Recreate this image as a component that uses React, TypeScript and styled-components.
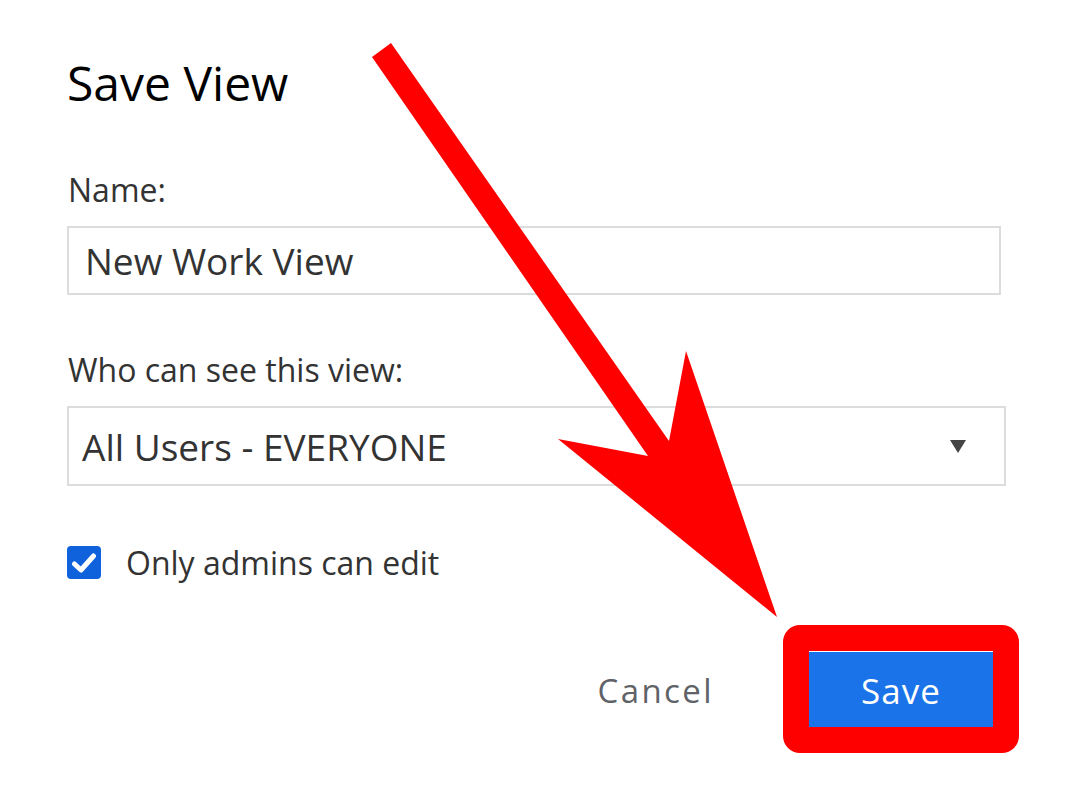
import {FC} from 'react'
import styled, {createGlobalStyle} from 'styled-components'

const GlobalStyle = createGlobalStyle`
  html, body {
    margin: 0;
    padding: 0;
    background: #ffffff;
  }

  body {
    font-family: "Open Sans", "Noto Sans", sans-serif;
  }
`

const Page = styled.div`
  position: relative;
  width: 1074px;
  height: 786px;
  overflow: hidden;
  background: #ffffff;
`

const Dialog = styled.div`
  display: flex;
  flex-direction: column;
  width: 939px;
  padding: 53px 0 0 67px;
`

const Title = styled.h1`
  margin: 0;
  font-size: 48px;
  line-height: 60px;
  font-weight: 400;
  color: #000000;
`

const Field = styled.div<{$top: number}>`
  display: flex;
  flex-direction: column;
  gap: 16px;
  margin-top: ${p => p.$top}px;
`

const Label = styled.label`
  padding-left: 1px;
  font-size: 32px;
  line-height: 40px;
  color: #333333;
`

const TextInput = styled.input`
  box-sizing: border-box;
  width: 934px;
  height: 69px;
  margin: 0;
  padding: 0 16px;
  border: 2px solid #dcdcdc;
  border-radius: 0;
  outline: none;
  font-family: inherit;
  font-size: 37px;
  color: #333333;
  background: #ffffff;
`

const SelectBox = styled.div`
  box-sizing: border-box;
  display: flex;
  align-items: center;
  justify-content: space-between;
  width: 939px;
  height: 80px;
  padding: 0 38px 0 13px;
  border: 2px solid #dcdcdc;
  font-size: 37px;
  color: #333333;
`

const Caret = styled.span`
  width: 0;
  height: 0;
  border-left: 8.5px solid transparent;
  border-right: 8.5px solid transparent;
  border-top: 13px solid #444444;
`

const CheckRow = styled.label`
  display: flex;
  align-items: center;
  gap: 25px;
  margin-top: 60px;
  font-size: 32px;
  line-height: 33px;
  color: #333333;
`

const CheckBox = styled.span`
  display: flex;
  align-items: center;
  justify-content: center;
  width: 34px;
  height: 33px;
  border-radius: 4px;
  background: #0f62dc;
`

const Actions = styled.div`
  display: flex;
  justify-content: flex-end;
  align-items: center;
  gap: 95px;
  margin-top: 73px;
  padding-right: 13px;
`

const CancelButton = styled.button`
  padding: 0;
  border: none;
  background: none;
  font-family: inherit;
  font-size: 33px;
  letter-spacing: 2.4px;
  color: #5f6368;
  cursor: pointer;
`

const SaveButton = styled.button`
  width: 184px;
  height: 76px;
  padding: 0;
  border: none;
  border-radius: 0;
  background: #1a73e8;
  font-family: inherit;
  font-size: 35px;
  letter-spacing: 1px;
  color: #ffffff;
  cursor: pointer;
`

const Highlight = styled.div`
  position: absolute;
  left: 783px;
  top: 625px;
  box-sizing: border-box;
  width: 236px;
  height: 128px;
  border: 26px solid #ff0000;
  border-radius: 17px;
  pointer-events: none;
`

const ArrowLayer = styled.svg`
  position: absolute;
  left: 0;
  top: 0;
  pointer-events: none;
`

const App: FC = () => {
  return (
    <Page>
      <GlobalStyle />
      <Dialog>
        <Title>Save View</Title>

        <Field $top={57}>
          <Label>Name:</Label>
          <TextInput defaultValue="New Work View" />
        </Field>

        <Field $top={55}>
          <Label>Who can see this view:</Label>
          <SelectBox>
            <span>All Users - EVERYONE</span>
            <Caret />
          </SelectBox>
        </Field>

        <CheckRow>
          <CheckBox>
            <svg width="26" height="22" viewBox="0 0 26 22">
              <path
                d="M3.5 12 L10 18 L22.5 4"
                fill="none"
                stroke="#ffffff"
                strokeWidth="5"
                strokeLinecap="round"
                strokeLinejoin="round"
              />
            </svg>
          </CheckBox>
          Only admins can edit
        </CheckRow>

        <Actions>
          <CancelButton>Cancel</CancelButton>
          <SaveButton>Save</SaveButton>
        </Actions>
      </Dialog>

      {/* annotation on top of the dialog */}
      <Highlight />
      <ArrowLayer width="1074" height="786" viewBox="0 0 1074 786">
        <polygon
          points="372,57 391,43 669,441 686,351 777,617 558,439 648,456"
          fill="#ff0000"
        />
      </ArrowLayer>
    </Page>
  )
}

export default App
